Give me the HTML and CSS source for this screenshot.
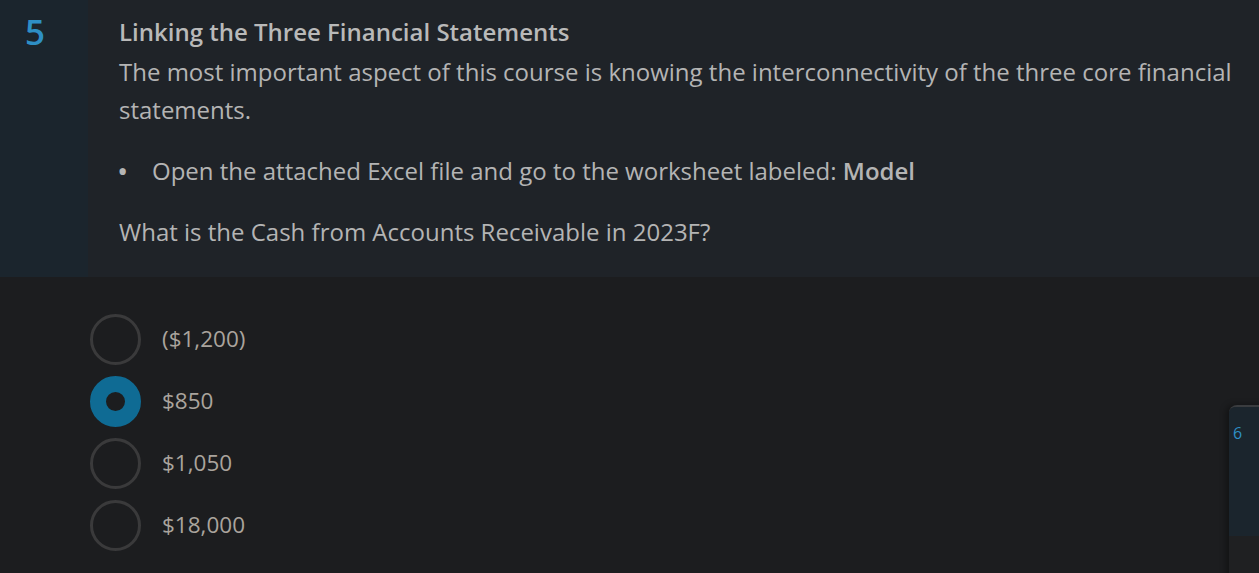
FILE: index.html
```html
<!DOCTYPE html>
<html>
<head>
<meta charset="utf-8">
<link rel="stylesheet" href="styles.css">
</head>
<body>
<section class="question">
  <div class="qnum">5</div>
  <div class="qbody">
    <h2 class="qtitle">Linking the Three Financial Statements</h2>
    <p class="qtext">The most important aspect of this course is knowing the interconnectivity of the three core financial statements.</p>
    <ul class="qlist">
      <li><span class="dot">•</span><span>Open the attached Excel file and go to the worksheet labeled: <strong>Model</strong></span></li>
    </ul>
    <p class="qask">What is the Cash from Accounts Receivable in 2023F?</p>
  </div>
</section>
<section class="options">
  <label class="opt"><span class="radio"></span><span class="label">($1,200)</span></label>
  <label class="opt"><span class="radio checked"></span><span class="label">$850</span></label>
  <label class="opt"><span class="radio"></span><span class="label">$1,050</span></label>
  <label class="opt"><span class="radio"></span><span class="label">$18,000</span></label>
</section>
<div class="nextcard">
  <div class="nexthead">6</div>
</div>
</body>
</html>
```
FILE: styles.css
```css
html, body {
  margin: 0;
  padding: 0;
}
body {
  background: #1c1d1f;
  font-family: "Open Sans", "Liberation Sans", sans-serif;
  color: #b4b4b4;
  width: 1259px;
  height: 573px;
  overflow: hidden;
  position: relative;
}
.question {
  display: flex;
  height: 277px;
  background: #1f2328;
}
.qnum {
  width: 88px;
  flex: none;
  box-sizing: border-box;
  background: #1b252d;
  color: #2e8fc5;
  font-size: 35px;
  font-weight: 600;
  line-height: 40px;
  padding: 12px 0 0 25px;
}
.qbody {
  padding: 13px 0 0 31px;
  font-size: 24px;
  line-height: 38px;
}
.qtitle {
  margin: 0 0 2px;
  font-size: 24px;
  font-weight: 600;
  color: #b9b9b9;
  line-height: 38px;
}
.qtext {
  margin: 0;
}
.qlist {
  list-style: none;
  margin: 23px 0 0;
  padding: 0;
}
.qlist li {
  display: flex;
}
.dot {
  width: 33px;
  flex: none;
  font-size: 30px;
  margin-left: -2px;
  padding-right: 2px;
}
.qlist strong {
  font-weight: 600;
}
.qask {
  margin: 23px 0 0;
}
.options {
  padding: 37px 0 0 90px;
  display: flex;
  flex-direction: column;
  gap: 11px;
}
.opt {
  display: flex;
  align-items: center;
  gap: 21px;
  height: 51px;
}
.label {
  position: relative;
  top: -1px;
}
.radio {
  width: 51px;
  height: 51px;
  box-sizing: border-box;
  border-radius: 50%;
  border: 3px solid #3a3a3b;
  flex: none;
}
.radio.checked {
  border: 16px solid #0f6b94;
  background: #1c1d1f;
}
.label {
  font-size: 22.5px;
  color: #aaa49d;
}
.nextcard {
  position: absolute;
  left: 1229px;
  top: 405px;
  width: 40px;
  height: 180px;
  background: #1f2022;
  border-top: 2px solid #3a3c3f;
  border-radius: 8px 0 0 0;
  box-shadow: -3px 0 6px rgba(0,0,0,0.35);
}
.nexthead {
  height: 129px;
  background: #1b252d;
  color: #2e8fc5;
  font-size: 16px;
  line-height: 20px;
  padding: 16px 0 0 4px;
  box-sizing: border-box;
  border-radius: 6px 0 0 0;
}
```
